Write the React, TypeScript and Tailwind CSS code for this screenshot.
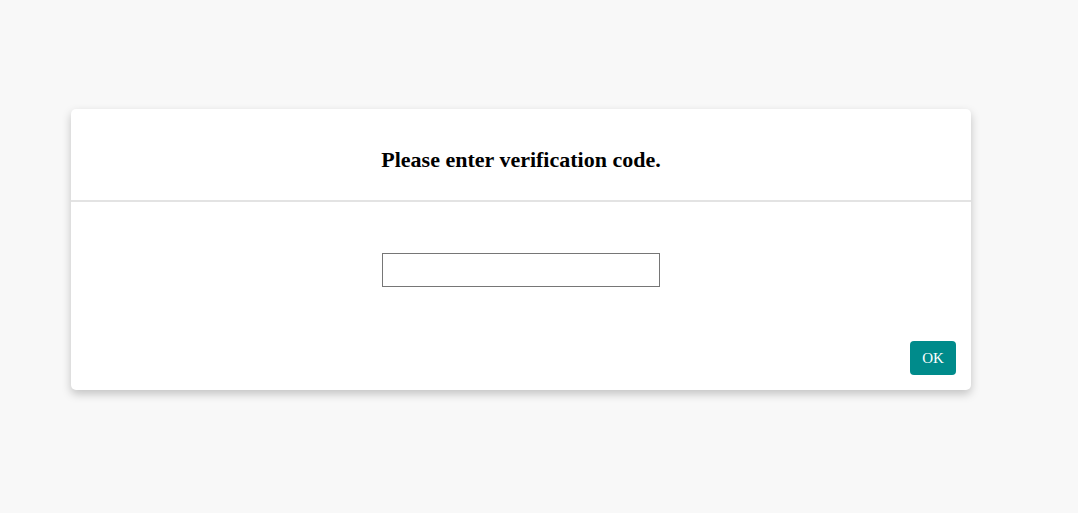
export default function App() {
  return (
    <div className="min-h-[513px] w-full bg-[#f8f8f8] pt-[109px] pl-[71px] font-['Liberation_Serif',serif]">
      <div className="w-[900px] rounded-[5px] bg-white shadow-[0_4px_10px_rgba(0,0,0,0.22)]">
        <div className="h-[93px] border-b-2 border-[#e3e3e3] pt-[38px] text-center">
          <h3 className="text-[22px] leading-[25px] font-bold text-black">Please enter verification code.</h3>
        </div>
        <div className="flex flex-col px-[15px] pb-[15px]">
          <div className="mt-[51px] flex justify-center">
            <input
              type="text"
              className="h-[34px] w-[278px] border border-[#767676] bg-white px-1 outline-none"
            />
          </div>
          <div className="mt-[54px] flex justify-end">
            <button className="h-[34px] w-[46px] rounded-[4px] bg-[#008b8b] text-[15px] text-white">
              OK
            </button>
          </div>
        </div>
      </div>
    </div>
  );
}
